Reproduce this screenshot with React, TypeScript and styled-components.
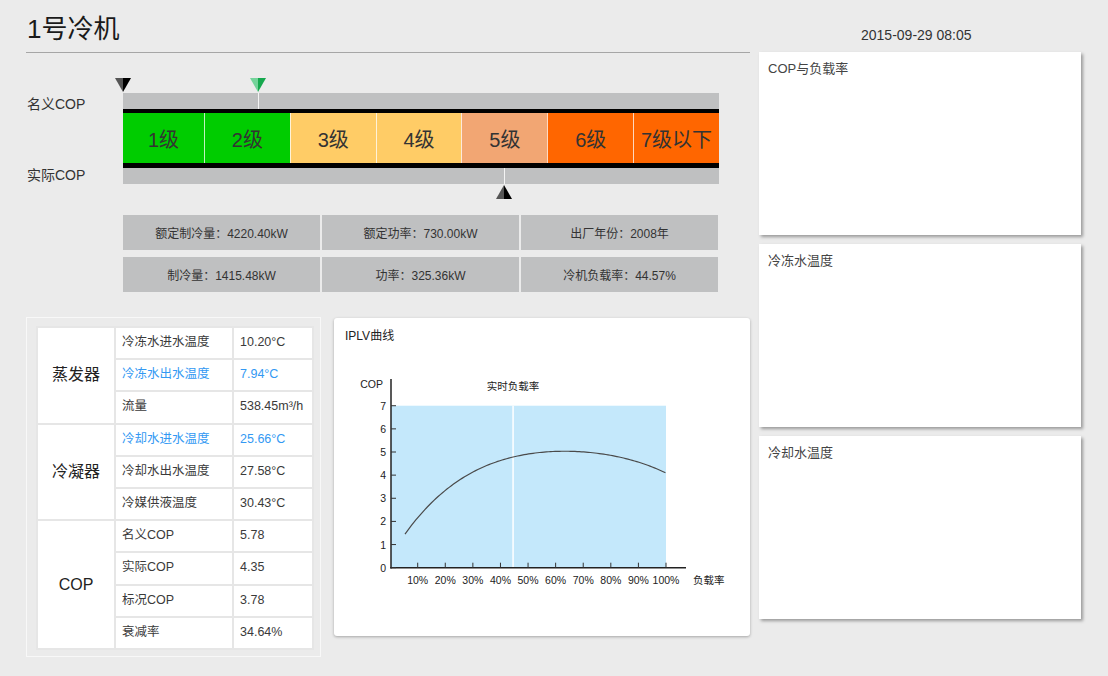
import React from "react";
import styled, { createGlobalStyle } from "styled-components";

const GlobalStyle = createGlobalStyle`
  html, body { margin: 0; padding: 0; background: #ebebeb; }
  body { font-family: "Liberation Sans", "Noto Sans CJK SC", sans-serif; color: #333; }
`;

const Page = styled.div`
  display: flex;
  width: 1108px;
  height: 676px;
  padding-left: 26px;
  box-sizing: border-box;
  overflow: hidden;
`;

const LeftCol = styled.div`
  width: 724px;
  display: flex;
  flex-direction: column;
`;

const Header = styled.header`
  height: 52px;
  border-bottom: 1px solid #a6a6a6;
  padding-left: 1px;
`;

const Title = styled.h1`
  margin: 0;
  padding-top: 14px;
  font-size: 26px;
  line-height: 30px;
  font-weight: normal;
  color: #1a1a1a;
`;

const ScaleSection = styled.section`
  margin-top: 25px;
  display: grid;
  grid-template-columns: 97px 596px;
  grid-template-rows: 15px 16px 4px 50px 5px 16px 14px;
`;

const ScaleLabel = styled.div<{ $row: string }>`
  grid-column: 1;
  grid-row: ${(p) => p.$row};
  display: flex;
  align-items: center;
  padding-left: 1px;
  font-size: 14px;
  color: #333;
`;

const MarkerRow = styled.div<{ $row: number }>`
  grid-column: 2;
  grid-row: ${(p) => p.$row};
  position: relative;
`;

const MarkerIcon = styled.svg<{ $pos: number; $top: number }>`
  position: absolute;
  left: calc(${(p) => p.$pos}% - 8px);
  top: ${(p) => p.$top}px;
  width: 16px;
  height: 14px;
  overflow: visible;
`;

const Track = styled.div<{ $row: number }>`
  grid-column: 2;
  grid-row: ${(p) => p.$row};
  position: relative;
  background: #bfc0c1;
`;

const TrackTick = styled.span<{ $pos: number }>`
  position: absolute;
  top: 0;
  bottom: 0;
  left: ${(p) => p.$pos}%;
  width: 1px;
  background: #f4f4f4;
`;

const Rule = styled.div<{ $row: number }>`
  grid-column: 2;
  grid-row: ${(p) => p.$row};
  background: #000;
`;

const Levels = styled.div`
  grid-column: 2;
  grid-row: 4;
  display: flex;
`;

const Level = styled.div<{ $bg: string; $first?: boolean }>`
  flex: ${(p) => (p.$first ? "0 0 81px" : "1 1 0")};
  background: ${(p) => p.$bg};
  border-left: ${(p) => (p.$first ? "none" : "1px solid rgba(255,255,255,0.75)")};
  display: flex;
  align-items: center;
  justify-content: center;
  font-size: 20px;
  color: #333;
`;

const InfoGrid = styled.div`
  margin: 17px 0 0 97px;
  width: 595px;
  display: grid;
  grid-template-columns: repeat(3, 1fr);
  column-gap: 2px;
  row-gap: 7px;
  grid-auto-rows: 35px;
`;

const InfoCell = styled.div`
  background: #bfc0c1;
  display: flex;
  align-items: center;
  justify-content: center;
  font-size: 12px;
  color: #333;
`;

const BottomRow = styled.div`
  margin-top: 25px;
  display: flex;
  gap: 13px;
  align-items: flex-start;
`;

const TablePanel = styled.div`
  width: 295px;
  height: 340px;
  box-sizing: border-box;
  border: 1px solid #f8f8f8;
  padding: 8px 8px 8px 9px;
`;

const DataTable = styled.table`
  width: 276px;
  border-collapse: collapse;
  table-layout: fixed;
  background: #fff;
  border: 2px solid #e6e6e6;
`;

const Row = styled.tr`
  height: 32.2px;
`;

const GroupCell = styled.td`
  border: 2px solid #e6e6e6;
  text-align: center;
  font-size: 16px;
  line-height: 18px;
  color: #222;
`;

const DataCell = styled.td<{ $hl?: boolean }>`
  border: 2px solid #e6e6e6;
  padding: 0 0 1px 6px;
  font-size: 12.5px;
  line-height: 15px;
  white-space: nowrap;
  overflow: hidden;
  color: ${(p) => (p.$hl ? "#3399f3" : "#3a3a3a")};
`;

const ChartCard = styled.div`
  width: 416px;
  height: 318px;
  margin-top: 1px;
  background: #fff;
  border-radius: 3px;
  box-shadow: 0 1px 3px rgba(0, 0, 0, 0.3);
  display: flex;
  flex-direction: column;
`;

const ChartTitle = styled.div`
  height: 26px;
  box-sizing: border-box;
  padding: 10px 11px 0;
  font-size: 12px;
  line-height: 16px;
  color: #222;
`;

const ChartSvg = styled.svg`
  display: block;
  width: 416px;
  height: 292px;
`;

const AxisText = styled.text`
  font-family: "Liberation Sans", "Noto Sans CJK SC", sans-serif;
  font-size: 10.5px;
  fill: #222;
`;

const RightCol = styled.div`
  margin-left: 9px;
  width: 322px;
  display: flex;
  flex-direction: column;
`;

const DateBar = styled.div`
  height: 52px;
  box-sizing: border-box;
  display: flex;
  align-items: flex-end;
  padding: 0 0 8px 102px;
  font-size: 14px;
  line-height: 18px;
  color: #333;
`;

const CardStack = styled.div`
  display: flex;
  flex-direction: column;
  gap: 9px;
`;

const Panel = styled.div`
  height: 183px;
  background: #fff;
  box-shadow: 2px 2px 3px rgba(0, 0, 0, 0.35);
`;

const PanelTitle = styled.div`
  padding: 8px 9px;
  font-size: 13px;
  line-height: 17px;
  color: #444;
`;

function Triangle({ pos, top, up, light, dark }: { pos: number; top: number; up?: boolean; light: string; dark: string }) {
  return (
    <MarkerIcon $pos={pos} $top={top} viewBox="0 0 16 14">
      {up ? (
        <>
          <polygon points="8,0 0,14 8,14" fill={light} />
          <polygon points="8,0 16,14 8,14" fill={dark} />
        </>
      ) : (
        <>
          <polygon points="0,0 8,0 8,14" fill={light} />
          <polygon points="8,0 16,0 8,14" fill={dark} />
        </>
      )}
    </MarkerIcon>
  );
}

const levels: { label: string; bg: string }[] = [
  { label: "1级", bg: "#00cc00" },
  { label: "2级", bg: "#00cc00" },
  { label: "3级", bg: "#ffcc66" },
  { label: "4级", bg: "#ffcc66" },
  { label: "5级", bg: "#f2a673" },
  { label: "6级", bg: "#ff6600" },
  { label: "7级以下", bg: "#ff6600" },
];

const info = [
  "额定制冷量：4220.40kW",
  "额定功率：730.00kW",
  "出厂年份：2008年",
  "制冷量：1415.48kW",
  "功率：325.36kW",
  "冷机负载率：44.57%",
];

type TRow = { group?: string; span?: number; name: string; value: string; hl?: boolean };
const rows: TRow[] = [
  { group: "蒸发器", span: 3, name: "冷冻水进水温度", value: "10.20°C" },
  { name: "冷冻水出水温度", value: "7.94°C", hl: true },
  { name: "流量", value: "538.45m³/h" },
  { group: "冷凝器", span: 3, name: "冷却水进水温度", value: "25.66°C", hl: true },
  { name: "冷却水出水温度", value: "27.58°C" },
  { name: "冷媒供液温度", value: "30.43°C" },
  { group: "COP", span: 4, name: "名义COP", value: "5.78" },
  { name: "实际COP", value: "4.35" },
  { name: "标况COP", value: "3.78" },
  { name: "衰减率", value: "34.64%" },
];

const X0 = 390.1;
const XS = 2.759;
const Y0 = 567.7;
const YS = 23.14;
const xp = (p: number) => X0 + XS * p;
const yc = (c: number) => Y0 - YS * c;

const samples: [number, number][] = [
  [5.4, 1.46],
  [12, 2.42],
  [18.1, 3.14],
  [24.1, 3.72],
  [30.2, 4.15],
  [36.2, 4.48],
  [44.4, 4.77],
  [50.7, 4.91],
  [62.8, 5.04],
  [79.7, 4.87],
  [91.8, 4.48],
  [99.6, 4.12],
];

function polyfit(data: [number, number][], deg: number): number[] {
  const n = deg + 1;
  const m: number[][] = Array.from({ length: n }, () => new Array(n + 1).fill(0));
  for (const [p, c] of data) {
    const t = p / 100;
    for (let i = 0; i < n; i++) {
      for (let j = 0; j < n; j++) m[i][j] += Math.pow(t, i + j);
      m[i][n] += c * Math.pow(t, i);
    }
  }
  for (let col = 0; col < n; col++) {
    let piv = col;
    for (let r = col + 1; r < n; r++) if (Math.abs(m[r][col]) > Math.abs(m[piv][col])) piv = r;
    [m[col], m[piv]] = [m[piv], m[col]];
    for (let r = 0; r < n; r++) {
      if (r === col) continue;
      const f = m[r][col] / m[col][col];
      for (let k = col; k <= n; k++) m[r][k] -= f * m[col][k];
    }
  }
  return m.map((row, i) => row[n] / row[i]);
}

const coef = polyfit(samples, 4);
const copAt = (p: number) => coef.reduce((s, a, i) => s + a * Math.pow(p / 100, i), 0);

function buildPath(): string {
  const parts: string[] = [];
  for (let p = 5.4; p <= 100.001; p += 0.8) {
    const q = Math.min(p, 100);
    parts.push(`${parts.length ? "L" : "M"}${xp(q).toFixed(2)},${yc(copAt(q)).toFixed(2)}`);
  }
  return parts.join(" ");
}

const curvePath = buildPath();
const loadRate = 44.57;

function IplvChart() {
  const yTicks = [0, 1, 2, 3, 4, 5, 6, 7];
  const xTicks = [10, 20, 30, 40, 50, 60, 70, 80, 90, 100];
  return (
    <ChartSvg viewBox="334 344 416 292">
      <rect x={391} y={yc(7)} width={xp(100) - 391} height={Y0 - yc(7)} fill="#c4e8fb" />
      <line x1={xp(loadRate)} x2={xp(loadRate)} y1={yc(7)} y2={Y0} stroke="#ffffff" strokeWidth={1.5} />
      <path d={curvePath} fill="none" stroke="#4a4a4a" strokeWidth={1.2} strokeLinejoin="round" />
      <line x1={391} x2={391} y1={379} y2={Y0 + 0.7} stroke="#222" strokeWidth={1.5} />
      <line x1={390.3} x2={686} y1={Y0} y2={Y0} stroke="#222" strokeWidth={1.5} />
      {yTicks.map((t) => (
        <g key={t}>
          <line x1={391} x2={396} y1={yc(t)} y2={yc(t)} stroke="#333" strokeWidth={1} />
          <AxisText x={386} y={yc(t)} textAnchor="end" dominantBaseline="central">
            {t}
          </AxisText>
        </g>
      ))}
      {xTicks.map((t) => (
        <g key={t}>
          <line x1={xp(t)} x2={xp(t)} y1={Y0 - 5} y2={Y0} stroke="#333" strokeWidth={1} />
          <AxisText x={xp(t)} y={580} textAnchor="middle" dominantBaseline="central">
            {t}%
          </AxisText>
        </g>
      ))}
      <AxisText x={383} y={384} textAnchor="end" dominantBaseline="central">
        COP
      </AxisText>
      <AxisText x={xp(loadRate)} y={386} textAnchor="middle" dominantBaseline="central">
        实时负载率
      </AxisText>
      <AxisText x={693} y={580} dominantBaseline="central">
        负载率
      </AxisText>
    </ChartSvg>
  );
}

export default function App() {
  const nominalPos = 22.65;
  const actualPos = 63.9;
  return (
    <>
      <GlobalStyle />
      <Page>
        <LeftCol>
          <Header>
            <Title>1号冷机</Title>
          </Header>
          <ScaleSection>
            <ScaleLabel $row="2 / span 2">名义COP</ScaleLabel>
            <ScaleLabel $row="5 / span 2">实际COP</ScaleLabel>
            <MarkerRow $row={1}>
              <Triangle pos={0} top={0} light="#555" dark="#000" />
              <Triangle pos={nominalPos} top={0} light="#74d39a" dark="#16a84e" />
            </MarkerRow>
            <Track $row={2}>
              <TrackTick $pos={nominalPos} />
            </Track>
            <Rule $row={3} />
            <Levels>
              {levels.map((l, i) => (
                <Level key={l.label} $bg={l.bg} $first={i === 0}>
                  {l.label}
                </Level>
              ))}
            </Levels>
            <Rule $row={5} />
            <Track $row={6}>
              <TrackTick $pos={actualPos} />
            </Track>
            <MarkerRow $row={7}>
              <Triangle pos={actualPos} top={1} up light="#555" dark="#000" />
            </MarkerRow>
          </ScaleSection>
          <InfoGrid>
            {info.map((t) => (
              <InfoCell key={t}>{t}</InfoCell>
            ))}
          </InfoGrid>
          <BottomRow>
            <TablePanel>
              <DataTable>
                <colgroup>
                  <col style={{ width: 78 }} />
                  <col style={{ width: 118 }} />
                  <col style={{ width: 80 }} />
                </colgroup>
                <tbody>
                  {rows.map((r) => (
                    <Row key={r.name}>
                      {r.group && <GroupCell rowSpan={r.span}>{r.group}</GroupCell>}
                      <DataCell $hl={r.hl}>{r.name}</DataCell>
                      <DataCell $hl={r.hl}>{r.value}</DataCell>
                    </Row>
                  ))}
                </tbody>
              </DataTable>
            </TablePanel>
            <ChartCard>
              <ChartTitle>IPLV曲线</ChartTitle>
              <IplvChart />
            </ChartCard>
          </BottomRow>
        </LeftCol>
        <RightCol>
          <DateBar>2015-09-29 08:05</DateBar>
          <CardStack>
            <Panel>
              <PanelTitle>COP与负载率</PanelTitle>
            </Panel>
            <Panel>
              <PanelTitle>冷冻水温度</PanelTitle>
            </Panel>
            <Panel>
              <PanelTitle>冷却水温度</PanelTitle>
            </Panel>
          </CardStack>
        </RightCol>
      </Page>
    </>
  );
}
